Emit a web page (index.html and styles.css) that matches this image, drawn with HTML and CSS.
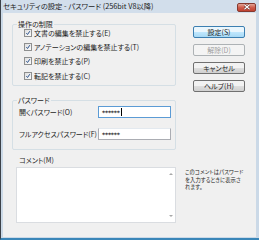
FILE: index.html
```html
<!DOCTYPE html>
<html lang="ja">
<head>
  <meta charset="utf-8">
  <title>セキュリティの設定 - パスワード</title>
  <link rel="stylesheet" href="styles.css">
</head>
<body>
  <div class="window">
    <div class="window__titlebar">
      <span class="window__title">セキュリティの設定 - パスワード (256bit V8以降)</span>
      <span class="window__close">
        <svg viewBox="0 0 8 6" width="8" height="6"><path d="M1.5 0.8 6.5 5.2M6.5 0.8 1.5 5.2" stroke="#5a1f1a" stroke-width="2.2"/><path d="M1.5 0.8 6.5 5.2M6.5 0.8 1.5 5.2" stroke="#fff" stroke-width="1.2"/></svg>
      </span>
    </div>

    <div class="window__client">
      <div class="dialog-top">
        <div class="dialog-left">
          <div class="group group_limits">
            <span class="group__title">操作の制限</span>
            <label class="check"><span class="check__box"><svg viewBox="0 0 8 8"><path d="M1.8 4.2 3.4 6 6.4 1.6" fill="none" stroke="#274f8c" stroke-width="1.3"/></svg></span>文書の編集を禁止する(E)</label>
            <label class="check"><span class="check__box"><svg viewBox="0 0 8 8"><path d="M1.8 4.2 3.4 6 6.4 1.6" fill="none" stroke="#274f8c" stroke-width="1.3"/></svg></span>アノテーションの編集を禁止する(T)</label>
            <label class="check"><span class="check__box"><svg viewBox="0 0 8 8"><path d="M1.8 4.2 3.4 6 6.4 1.6" fill="none" stroke="#274f8c" stroke-width="1.3"/></svg></span>印刷を禁止する(P)</label>
            <label class="check"><span class="check__box"><svg viewBox="0 0 8 8"><path d="M1.8 4.2 3.4 6 6.4 1.6" fill="none" stroke="#274f8c" stroke-width="1.3"/></svg></span>転記を禁止する(C)</label>
          </div>

          <div class="group group_password">
            <span class="group__title">パスワード</span>
            <div class="field">
              <span class="field__label">開くパスワード(O)</span>
              <div class="edit edit_focus">******<span class="edit__caret"></span></div>
            </div>
            <div class="field">
              <span class="field__label">フルアクセスパスワード(F)</span>
              <div class="edit">******</div>
            </div>
          </div>
        </div>

        <div class="dialog-buttons">
          <button class="button button_default">設定(S)</button>
          <button class="button" disabled>解除(D)</button>
          <button class="button">キャンセル</button>
          <button class="button">ヘルプ(H)</button>
        </div>
      </div>

      <div class="comment">
        <span class="comment__label">コメント(M)</span>
        <div class="comment__row">
          <div class="memo">
            <div class="memo__text"></div>
            <div class="memo__scroll">
              <span class="memo__arrow memo__arrow_up"></span>
              <span class="memo__arrow memo__arrow_down"></span>
            </div>
          </div>
          <p class="comment__note">このコメントはパスワード<br>を入力するときに表示さ<br>れます。</p>
        </div>
      </div>
    </div>
  </div>
</body>
</html>
```

FILE: styles.css
```css
*,
*::before,
*::after {
  box-sizing: border-box;
  margin: 0;
  padding: 0;
}

body {
  width: 259px;
  height: 240px;
  overflow: hidden;
  font-family: "Noto Sans CJK JP", "Noto Sans", sans-serif;
  font-feature-settings: "palt";
  font-size: 7px;
  color: #1e1e1e;
  background-color: #ffffff;
}

.window {
  display: flex;
  flex-direction: column;
  width: 259px;
  height: 240px;
  padding: 0 3px 1px 2px;
  border-left: 1px solid #3c4148;
  border-bottom: 2px solid #3a86b8;
  background-color: #cbd9e7;
}

.window__titlebar {
  display: flex;
  justify-content: space-between;
  align-items: center;
  height: 13px;
  flex-shrink: 0;
  background-color: #d2deeb;
}

.window__title {
  font-size: 7.3px;
  line-height: 1;
  color: #1c1c1c;
  white-space: nowrap;
}

.window__close {
  display: flex;
  justify-content: center;
  align-items: center;
  width: 19px;
  height: 9px;
  margin-top: 1px;
  border: 1px solid #86392f;
  border-radius: 2px;
  background: linear-gradient(#e3a596, #cf5d4c 50%, #c0402f);
}

.window__close svg {
  display: block;
}

.window__client {
  flex: 1;
  display: flex;
  flex-direction: column;
  background-color: #f0f0f0;
}

.dialog-top {
  display: flex;
  padding: 11px 0 0 9px;
}

.dialog-left {
  width: 164px;
}

.group {
  position: relative;
  border: 1px solid #d5dfe5;
  border-radius: 2px;
}

.group__title {
  position: absolute;
  top: -5px;
  left: 4px;
  padding: 0 1px;
  line-height: 9px;
  background-color: #f0f0f0;
}

.group_limits {
  height: 62px;
  padding: 0 0 0 11px;
}

.check {
  display: flex;
  align-items: center;
  gap: 2px;
  height: 14px;
  white-space: nowrap;
}

.check:first-of-type {
  margin-top: 1px;
}

.check:last-child {
  margin-top: 1px;
}

.check__box {
  display: block;
  width: 8px;
  height: 8px;
  border: 1px solid #8e8f8f;
  background: linear-gradient(135deg, #dedede, #fbfbfb);
}

.check__box svg {
  display: block;
  width: 6px;
  height: 6px;
}

.group_password {
  height: 50px;
  margin-top: 14px;
  padding: 5px 4px 0 6px;
}

.field {
  display: flex;
  justify-content: space-between;
  align-items: center;
  height: 12px;
  margin-bottom: 10px;
}

.field__label {
  white-space: nowrap;
}

.edit {
  display: flex;
  align-items: center;
  width: 73px;
  height: 12px;
  padding-left: 3px;
  border: 1px solid #abadb3;
  border-top-color: #e3e9ef;
  background-color: #ffffff;
  font-family: "DejaVu Sans", sans-serif;
  font-weight: bold;
  font-size: 6px;
  letter-spacing: -0.2px;
}

.edit_focus {
  border-color: #5b9bd5;
}

.edit__caret {
  width: 1px;
  height: 8px;
  margin-left: 1px;
  background-color: #000000;
}

.dialog-buttons {
  display: flex;
  flex-direction: column;
  gap: 6px;
  width: 52px;
  margin: 2px 0 0 17px;
}

.button {
  height: 12px;
  border: 1px solid #707070;
  border-radius: 2px;
  background: linear-gradient(#f2f2f2 45%, #dddddd 55%, #d0d0d0);
  font-family: inherit;
  font-feature-settings: "palt";
  font-size: 7px;
  line-height: 1;
  color: #1e1e1e;
}

.button_default {
  border-color: #3c7fb1;
  background: linear-gradient(#eaf6fd 45%, #bee6fd 55%, #a7d9f5);
}

.button:disabled {
  border-color: #adb2b5;
  background: #f4f4f4;
  color: #a0a0a0;
}

.comment {
  padding: 6px 0 0 13px;
}

.comment__label {
  display: block;
  padding-left: 3px;
  line-height: 8px;
}

.comment__row {
  display: flex;
  gap: 9px;
  margin-top: 3px;
}

.memo {
  display: flex;
  width: 160px;
  height: 56px;
  border: 1px solid #dadde1;
  background-color: #ffffff;
}

.memo__text {
  flex: 1;
}

.memo__scroll {
  display: flex;
  flex-direction: column;
  justify-content: space-between;
  align-items: center;
  width: 9px;
  padding: 5px 0;
}

.memo__arrow {
  width: 0;
  height: 0;
  border-left: 2px solid transparent;
  border-right: 2px solid transparent;
}

.memo__arrow_up {
  border-bottom: 2px solid #a8a8a8;
}

.memo__arrow_down {
  border-top: 2px solid #a8a8a8;
}

.comment__note {
  margin-top: 2px;
  font-size: 5.3px;
  line-height: 7.7px;
  letter-spacing: 0.1px;
  white-space: nowrap;
}
```
